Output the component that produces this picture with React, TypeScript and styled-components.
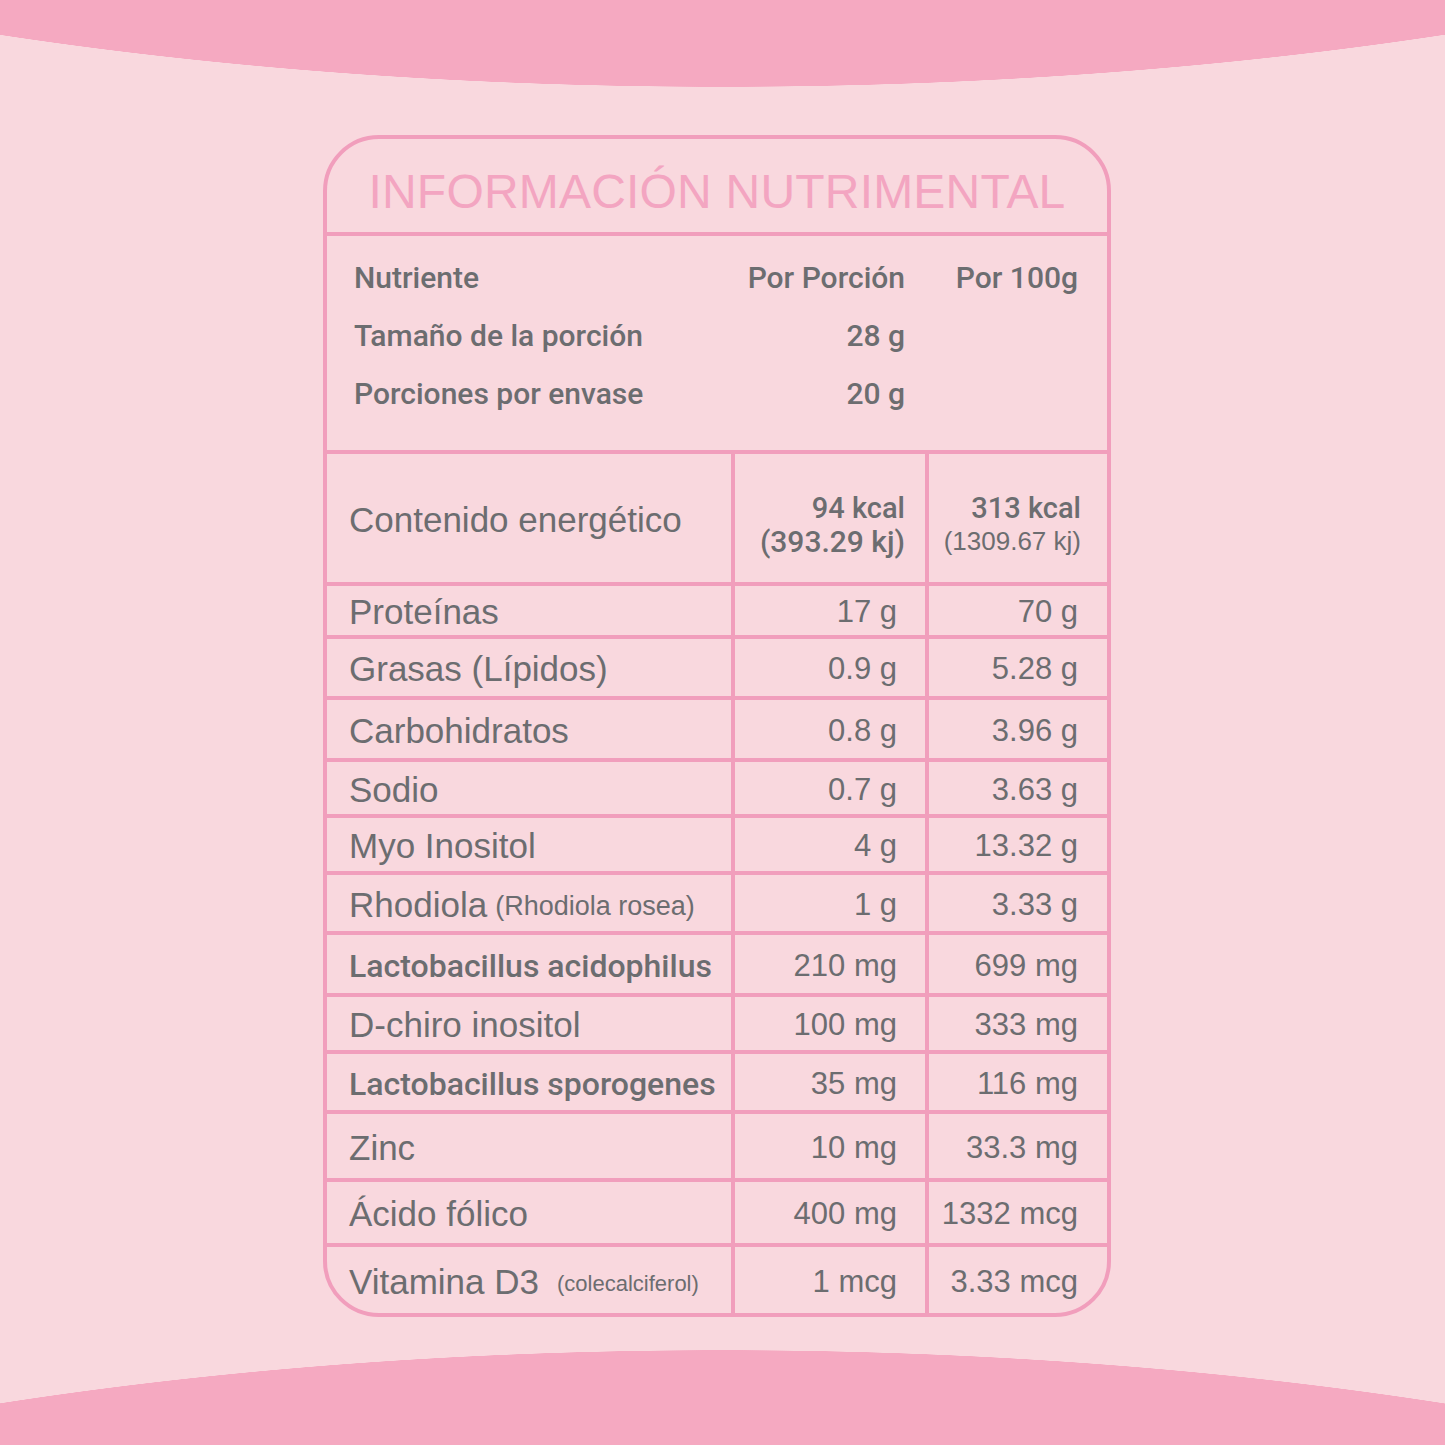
import React from "react";
import styled, { createGlobalStyle } from "styled-components";

const GlobalStyle = createGlobalStyle`
  html, body {
    margin: 0;
    padding: 0;
    background: #f9d8de;
  }
`;

const pink = "#f19ebc";
const gray = "#6c6d70";
const medium = `Roboto, "Liberation Sans", sans-serif`;
const plain = `"Liberation Sans", Arial, sans-serif`;

const Page = styled.div`
  width: 1445px;
  height: 1445px;
  box-sizing: border-box;
  padding: 135px 11px 0 0;
  display: flex;
  justify-content: center;
  align-items: flex-start;
  overflow: hidden;
  background-color: #f9d8de;
  background-image:
    radial-gradient(ellipse 1607px 487px at 722px -400px, #f5a9c1 calc(100% - 1.5px), rgba(245, 169, 193, 0) 100%),
    radial-gradient(ellipse 1610px 500px at 722px 1850px, #f5a9c1 calc(100% - 1.5px), rgba(245, 169, 193, 0) 100%);
  background-repeat: no-repeat;
`;

const Card = styled.div`
  width: 788px;
  box-sizing: border-box;
  border: 4px solid ${pink};
  border-radius: 56px;
  overflow: hidden;
  display: flex;
  flex-direction: column;
`;

const Title = styled.h1`
  margin: 0;
  height: 97px;
  box-sizing: border-box;
  padding-top: 12px;
  border-bottom: 4px solid ${pink};
  display: flex;
  align-items: center;
  justify-content: center;
  font-family: ${plain};
  font-weight: 400;
  font-size: 48px;
  letter-spacing: 0.2px;
  color: #f3a5c1;
`;

const Info = styled.div`
  height: 218px;
  box-sizing: border-box;
  padding: 12px 29px 0 27px;
  border-bottom: 4px solid ${pink};
  display: grid;
  grid-template-columns: 1fr 200px 173px;
  grid-auto-rows: 58px;
  align-items: center;
  font-family: ${medium};
  font-weight: 500;
  font-size: 30px;
  color: ${gray};
`;

const InfoCell = styled.div<{ $right?: boolean }>`
  text-align: ${(p) => (p.$right ? "right" : "left")};
`;

const Row = styled.div<{ $h: number; $last?: boolean }>`
  height: ${(p) => p.$h}px;
  box-sizing: border-box;
  padding-top: 3px;
  display: grid;
  grid-template-columns: 404px 194px 182px;
  border-bottom: ${(p) => (p.$last ? "none" : `4px solid ${pink}`)};
`;

const Label = styled.div`
  display: flex;
  align-items: center;
  padding-left: 22px;
  white-space: nowrap;
  color: ${gray};
`;

const Name = styled.span<{ $bold?: boolean }>`
  font-family: ${(p) => (p.$bold ? medium : plain)};
  font-weight: ${(p) => (p.$bold ? 500 : 400)};
  font-size: ${(p) => (p.$bold ? 32 : 35)}px;
`;

const Note = styled.span<{ $size: number; $gap: number }>`
  font-family: ${plain};
  font-size: ${(p) => p.$size}px;
  margin-left: ${(p) => p.$gap}px;
  padding-top: 4px;
`;

const Value = styled.div<{ $pr: number; $top?: number }>`
  box-sizing: border-box;
  border-left: 4px solid ${pink};
  margin-top: -3px;
  display: flex;
  flex-direction: column;
  align-items: flex-end;
  justify-content: center;
  padding-right: ${(p) => p.$pr}px;
  padding-top: ${(p) => p.$top ?? 3}px;
  font-family: ${plain};
  font-size: 31px;
  color: ${gray};
  white-space: nowrap;
`;

const Kcal = styled.span`
  font-family: ${medium};
  font-weight: 500;
  font-size: 29px;
  line-height: 33px;
`;

const Kj = styled.span<{ $light?: boolean }>`
  font-family: ${(p) => (p.$light ? plain : medium)};
  font-weight: ${(p) => (p.$light ? 400 : 500)};
  font-size: ${(p) => (p.$light ? 26 : 30)}px;
  line-height: 33px;
`;

type Item = {
  h: number;
  name: string;
  bold?: boolean;
  note?: string;
  noteSize?: number;
  noteGap?: number;
  a: string;
  b: string;
};

const items: Item[] = [
  { h: 53, name: "Proteínas", a: "17 g", b: "70 g" },
  { h: 61, name: "Grasas (Lípidos)", a: "0.9 g", b: "5.28 g" },
  { h: 62, name: "Carbohidratos", a: "0.8 g", b: "3.96 g" },
  { h: 56, name: "Sodio", a: "0.7 g", b: "3.63 g" },
  { h: 57, name: "Myo Inositol", a: "4 g", b: "13.32 g" },
  { h: 60, name: "Rhodiola", note: "(Rhodiola rosea)", noteSize: 27, noteGap: 8, a: "1 g", b: "3.33 g" },
  { h: 62, name: "Lactobacillus acidophilus", bold: true, a: "210 mg", b: "699 mg" },
  { h: 57, name: "D-chiro inositol", a: "100 mg", b: "333 mg" },
  { h: 60, name: "Lactobacillus sporogenes", bold: true, a: "35 mg", b: "116 mg" },
  { h: 68, name: "Zinc", a: "10 mg", b: "33.3 mg" },
  { h: 65, name: "Ácido fólico", a: "400 mg", b: "1332 mcg" },
  { h: 66, name: "Vitamina D3", note: "(colecalciferol)", noteSize: 22, noteGap: 18, a: "1 mcg", b: "3.33 mcg" },
];

export default function App() {
  return (
    <>
      <GlobalStyle />
      <Page>
        <Card>
          <Title>INFORMACIÓN NUTRIMENTAL</Title>
          <Info>
            <InfoCell>Nutriente</InfoCell>
            <InfoCell $right>Por Porción</InfoCell>
            <InfoCell $right>Por 100g</InfoCell>
            <InfoCell>Tamaño de la porción</InfoCell>
            <InfoCell $right>28 g</InfoCell>
            <InfoCell />
            <InfoCell>Porciones por envase</InfoCell>
            <InfoCell $right>20 g</InfoCell>
            <InfoCell />
          </Info>
          <Row $h={132}>
            <Label>
              <Name>Contenido energético</Name>
            </Label>
            <Value $pr={20} $top={14}>
              <Kcal>94 kcal</Kcal>
              <Kj>(393.29 kj)</Kj>
            </Value>
            <Value $pr={26} $top={14}>
              <Kcal>313 kcal</Kcal>
              <Kj $light>(1309.67 kj)</Kj>
            </Value>
          </Row>
          {items.map((it, i) => (
            <Row key={it.name} $h={it.h} $last={i === items.length - 1}>
              <Label>
                <Name $bold={it.bold}>{it.name}</Name>
                {it.note && (
                  <Note $size={it.noteSize ?? 24} $gap={it.noteGap ?? 8}>
                    {it.note}
                  </Note>
                )}
              </Label>
              <Value $pr={28}>{it.a}</Value>
              <Value $pr={29}>{it.b}</Value>
            </Row>
          ))}
        </Card>
      </Page>
    </>
  );
}
